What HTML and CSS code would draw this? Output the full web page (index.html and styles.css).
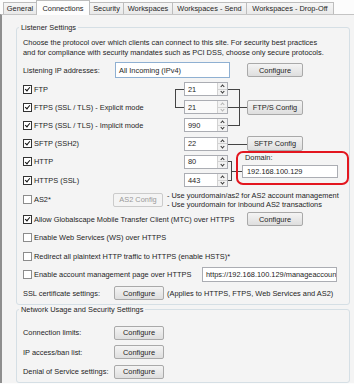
FILE: index.html
```html
<!DOCTYPE html>
<html lang="en">

<head>
    <meta charset="UTF-8">
    <title>Site Connections</title>
    <link rel="stylesheet" href="styles.css">
</head>

<body>

    <div class="tabs">
        <span class="tab w33">General</span>
        <span class="tab w53 on">Connections</span>
        <span class="tab w34">Security</span>
        <span class="tab w50">Workspaces</span>
        <span class="tab w74">Workspaces - Send</span>
        <span class="tab w87">Workspaces - Drop-Off</span>
    </div>

    <div class="panel">

        <fieldset class="group listener">
            <legend>Listener Settings</legend>

            <p class="desc">Choose the protocol over which clients can connect to this site. For security best practices<br>and for compliance with security mandates such as PCI DSS, choose only secure protocols.</p>

            <div class="row ip-row">
                <span class="lbl w92">Listening IP addresses:</span>
                <span class="field ip-field">All Incoming (IPv4)</span>
                <span class="btn ml17">Configure</span>
            </div>

            <!-- protocol list with ports and the bracket lines between them -->
            <div class="protos">
                <span class="opt"><i class="cb on"></i>FTP</span>
                <span class="bk lb top"></span>
                <span class="spin"><span class="val">21</span><span class="arr"><i class="up"></i><i class="dn"></i></span></span>
                <span class="bk rb top"></span>

                <span class="opt"><i class="cb on"></i>FTPS (SSL / TLS) - Explicit mode</span>
                <span class="bk lb bot"></span>
                <span class="spin off"><span class="val">21</span><span class="arr"><i class="up"></i><i class="dn"></i></span></span>
                <span class="bk rb mid"></span>
                <span class="bk link c7"></span>
                <span class="btn c8">FTP/S Config</span>

                <span class="opt"><i class="cb on"></i>FTPS (SSL / TLS) - Implicit mode</span>
                <span class="spin"><span class="val">990</span><span class="arr"><i class="up"></i><i class="dn"></i></span></span>
                <span class="bk rb bot"></span>

                <span class="opt"><i class="cb on"></i>SFTP (SSH2)</span>
                <span class="spin"><span class="val">22</span><span class="arr"><i class="up"></i><i class="dn"></i></span></span>
                <span class="bk link c4-8"></span>
                <span class="btn c8">SFTP Config</span>

                <span class="opt"><i class="cb on"></i>HTTP</span>
                <span class="spin"><span class="val">80</span><span class="arr"><i class="up"></i><i class="dn"></i></span></span>
                <span class="bk hb top"></span>
                <span class="bk link c5 span2"></span>
                <div class="domain">
                    <span class="domain-lbl">Domain:</span>
                    <div class="domain-row">
                        <span class="stub"></span>
                        <span class="field domain-field">192.168.100.129</span>
                    </div>
                </div>

                <span class="opt"><i class="cb on"></i>HTTPS (SSL)</span>
                <span class="spin"><span class="val">443</span><span class="arr"><i class="up"></i><i class="dn"></i></span></span>
                <span class="bk hb bot"></span>
            </div>

            <div class="row as2-row">
                <span class="opt w90"><i class="cb"></i>AS2*</span>
                <span class="btn w50 off">AS2 Config</span>
                <span class="note">- Use yourdomain/as2 for AS2 account management<br>- Use yourdomain for inbound AS2 transactions</span>
            </div>

            <div class="row">
                <span class="opt w224"><i class="cb on"></i>Allow Globalscape Mobile Transfer Client (MTC) over HTTPS</span>
                <span class="btn">Configure</span>
            </div>

            <div class="row">
                <span class="opt"><i class="cb"></i>Enable Web Services (WS) over HTTPS</span>
            </div>

            <div class="row">
                <span class="opt"><i class="cb"></i>Redirect all plaintext HTTP traffic to HTTPS (enable HSTS)*</span>
            </div>

            <div class="row">
                <span class="opt w179"><i class="cb"></i>Enable account management page over HTTPS</span>
                <span class="field url-field">https://192.168.100.129/manageaccount</span>
            </div>

            <div class="row">
                <span class="lbl w91">SSL certificate settings:</span>
                <span class="btn w50">Configure</span>
                <span class="after">(Applies to HTTPS, FTPS, Web Services and AS2)</span>
            </div>
        </fieldset>

        <fieldset class="group network">
            <legend>Network Usage and Security Settings</legend>

            <div class="row tall">
                <span class="lbl w91">Connection limits:</span>
                <span class="btn w50">Configure</span>
            </div>
            <div class="row tall">
                <span class="lbl w91">IP access/ban list:</span>
                <span class="btn w50">Configure</span>
            </div>
            <div class="row tall">
                <span class="lbl w91">Denial of Service settings:</span>
                <span class="btn w50">Configure</span>
            </div>
        </fieldset>

    </div>

</body>

</html>
```

FILE: styles.css
```css
body {
    font-family: 'Liberation Sans', Arial, sans-serif;
    font-size: 7.4px;
    color: #1e1e1e;
    margin: 0;
    padding: 0;
    width: 354px;
    height: 384px;
    overflow: hidden;
    background-color: #fcfcfc;
}

/* tab strip */

.tabs {
    display: flex;
    align-items: flex-end;
    height: 14px;
    padding-left: 3px;
}

.tab {
    box-sizing: border-box;
    height: 12px;
    display: flex;
    align-items: center;
    justify-content: center;
    border: 1px solid #bdbdbd;
    border-bottom: none;
    margin-right: -1px;
    background: linear-gradient(#f6f6f6, #e9e9e9);
    white-space: nowrap;
}

.tab.on {
    height: 15px;
    margin-bottom: -1px;
    background: #fdfdfd;
    position: relative;
    z-index: 1;
}

.w33 { width: 34px; }
.w53 { width: 54px; }
.w34 { width: 35px; }
.w50 { width: 50px; }
.w74 { width: 75px; }
.w87 { width: 88px; }

/* page body */

.panel {
    height: 369px;
    box-sizing: border-box;
    border-top: 1px solid #c4c4c4;
    border-left: 2px solid #8e8e8e;
    padding: 0 4px 0 14px;
    background-color: #f4f4f4;
}

.group {
    margin: 7.5px 0 0;
    padding: 6.5px 0 1.5px 6px;
    border: 1px solid #d5dfe5;
    border-radius: 3px;
    min-width: 0;
}

.group legend {
    padding: 0 2px;
    margin-left: -4px;
    line-height: 9px;
}

.network {
    margin-top: 0.5px;
    padding-top: 8.75px;
    padding-bottom: 0.5px;
}

.desc {
    margin: 0;
    line-height: 9.5px;
    white-space: nowrap;
}

.row {
    display: flex;
    align-items: center;
    height: 18.5px;
    white-space: nowrap;
}

.row.tall {
    height: 19.5px;
}

.ip-row {
    height: 16px;
    margin-top: 5px;
}

.as2-row {
    height: 20.8px;
}

.lbl {
    flex: none;
}

.w92 { width: 92px; }
.w91 { width: 91px; }
.w90 { width: 90px; }
.w224 { width: 224px; }
.w179 { width: 179px; }
.ml17 { margin-left: 17px; }

/* checkboxes */

.opt {
    display: flex;
    align-items: center;
    white-space: nowrap;
    flex: none;
}

.cb {
    width: 9px;
    height: 9px;
    box-sizing: border-box;
    border: 1px solid #8c8c8c;
    background: #fff;
    margin-right: 2px;
    flex: none;
    display: flex;
    align-items: center;
    justify-content: center;
}

.cb.on {
    border-color: #333;
}

.cb.on::before {
    content: "";
    width: 2px;
    height: 4px;
    border: solid #111;
    border-width: 0 1.5px 1.5px 0;
    transform: rotate(40deg);
    margin-top: -1.5px;
}

/* buttons and fields */

.btn {
    box-sizing: border-box;
    width: 56px;
    height: 14px;
    flex: none;
    display: flex;
    align-items: center;
    justify-content: center;
    border: 1px solid #a9a9a9;
    border-radius: 2px;
    background: linear-gradient(#f4f4f4, #dedede);
    white-space: nowrap;
}

.btn.w50 {
    width: 50px;
}

.btn.off {
    color: #9a9a9a;
    border-color: #cbcbcb;
    background: #f4f4f4;
}

.field {
    box-sizing: border-box;
    height: 15px;
    display: flex;
    align-items: center;
    padding-left: 3px;
    border: 1px solid #abadb3;
    background: #fff;
    overflow: hidden;
    white-space: nowrap;
    flex: none;
}

.ip-field {
    width: 115px;
    height: 16px;
    border-color: #8fb0d2;
}

.url-field {
    width: 135px;
}

.note {
    margin-left: 4px;
    line-height: 9px;
}

.after {
    margin-left: 3px;
}

/* protocol grid */

.protos {
    display: grid;
    grid-template-columns: 152px 9px 44px 4px 4px 4px 7px 56px 1fr;
    grid-template-rows: repeat(6, 18.2px);
    margin-top: 2px;
}

.protos .opt {
    grid-column: 1;
}

.protos .btn {
    align-self: center;
    height: 15px;
}

.c8 { grid-column: 8; }

.spin {
    grid-column: 3;
    align-self: center;
    height: 14px;
    display: flex;
    box-sizing: border-box;
    border: 1px solid #abadb3;
    background: #fff;
}

.spin .val {
    flex: 1;
    display: flex;
    align-items: center;
    padding-left: 3px;
}

.spin .arr {
    width: 9px;
    display: flex;
    flex-direction: column;
    border-left: 1px solid #d2d2d2;
    background: #f2f2f2;
}

.arr i {
    flex: 1;
    display: flex;
    align-items: center;
    justify-content: center;
}

.arr i + i {
    border-top: 1px solid #d2d2d2;
}

.arr i::before {
    content: "";
    width: 2px;
    height: 2px;
    border: solid #333;
    border-width: 1px 0 0 1px;
}

.arr .up::before {
    transform: rotate(45deg);
    margin-top: 1.5px;
}

.arr .dn::before {
    transform: rotate(225deg);
    margin-top: -1.5px;
}

.spin.off {
    background: #fafafa;
}

.spin.off .arr i::before {
    border-color: #b4b4b4;
}

/* bracket lines, drawn with half-cell borders */

.bk {
    display: flex;
    flex-direction: column;
}

.bk::before,
.bk::after {
    content: "";
    flex: 1;
}

.lb { grid-column: 2; }
.rb { grid-column: 4 / 7; }
.hb { grid-column: 4; }
.c7 { grid-column: 7; }
.c4-8 { grid-column: 4 / 8; }
.c5 { grid-column: 5; }
.span2 { grid-row: span 2; }

.lb.top::after {
    border-top: 1px solid #444;
    border-left: 1px solid #444;
}

.lb.bot::before {
    border-bottom: 1px solid #444;
    border-left: 1px solid #444;
}

.rb.top::after,
.hb.top::after {
    border-top: 1px solid #444;
    border-right: 1px solid #444;
}

.rb.bot::before,
.hb.bot::before {
    border-bottom: 1px solid #444;
    border-right: 1px solid #444;
}

.rb.mid {
    border-right: 1px solid #444;
}

.rb.mid::before,
.link::before {
    border-bottom: 1px solid #444;
}

.lb.bot::before,
.rb.bot::before,
.hb.bot::before,
.rb.mid::before,
.link::before {
    margin-bottom: -1px;
}

/* domain box */

.domain {
    grid-column: 6 / 10;
    grid-row: 5 / 7;
    margin: -1.8px 0 3.8px;
    border: 2px solid #e3161f;
    border-radius: 7px;
    display: flex;
    flex-direction: column;
    padding: 0 0 5px;
}

.domain-lbl {
    line-height: 9px;
    padding-left: 7px;
}

.domain-row {
    display: flex;
    align-items: center;
    margin-top: 3px;
}

.stub {
    width: 4px;
    border-top: 1px solid #444;
}

.domain-field {
    width: 96px;
    height: 13px;
    padding-left: 4px;
}
```
